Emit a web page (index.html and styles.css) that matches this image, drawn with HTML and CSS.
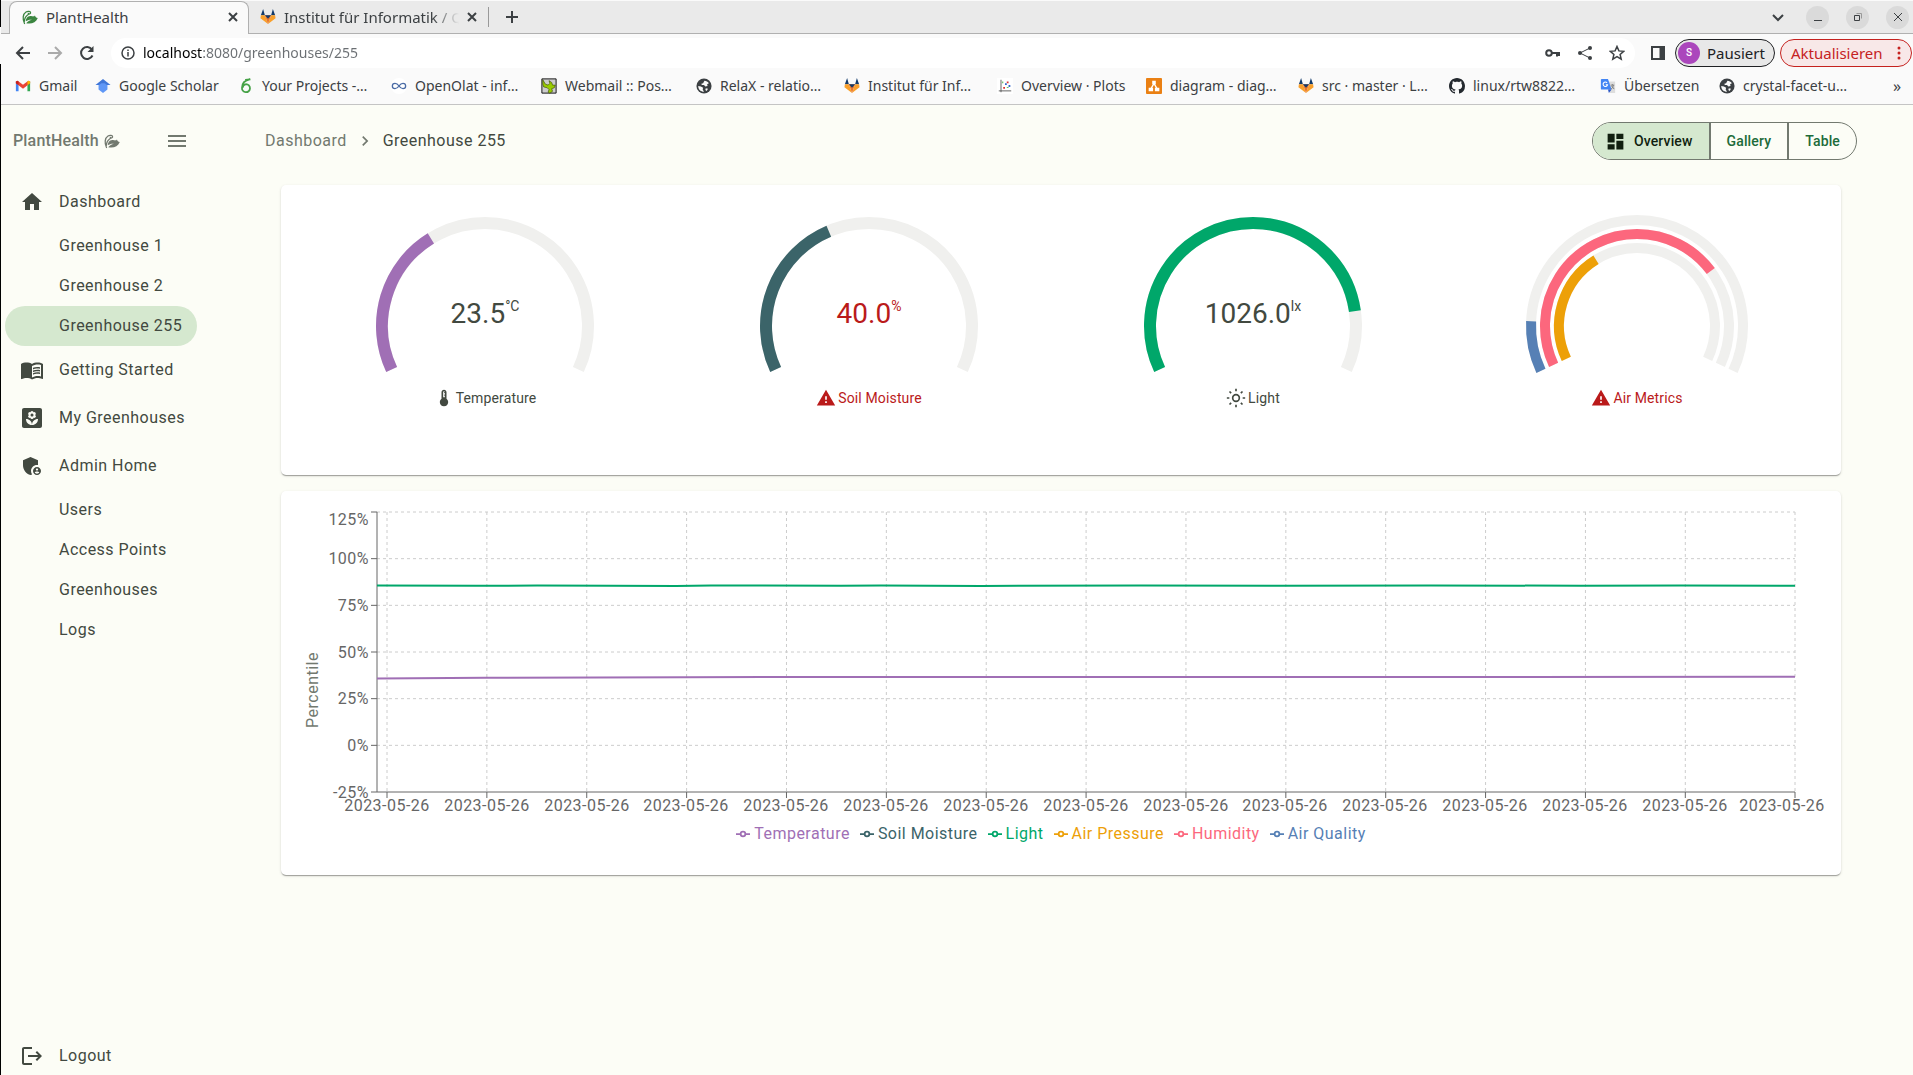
FILE: index.html
```html
<!DOCTYPE html>
<html lang="de">
<head>
<meta charset="utf-8">
<meta name="viewport" content="width=device-width, initial-scale=1">
<title>PlantHealth</title>
<link rel="stylesheet" href="styles.css">
</head>
<body>
<svg class="defs" aria-hidden="true">
  <symbol id="fox" viewBox="0 0 18 18"><path fill="#123a6b" d="M3.500 0 5.500 7H1zM14.500 0 17 7h-4.500z"/><path fill="#f9a02b" d="M1 7h4.500L9 17 .5 10.500zM17 7h-4.500L9 17l8.500-6.500z"/><path fill="#e8762c" d="M5.500 7h7L9 17z"/><path fill="#123a6b" d="M5.500 7h7L9 11z"/></symbol>
  <symbol id="globe" viewBox="0 0 18 18"><circle cx="9" cy="9" r="8.500" fill="#3c4043"/><path fill="#fafafa" d="M9.500 3c2 0 4 1 5 3l-2 1 .5 2-2.500.5L9 8H6.500L6 6.500 8 6zM2.500 9l3 .5L8 11l-.5 2L9 15.500C5.500 15.500 2.500 13 2.500 9zM11 11.500l2.500.5-1.500 2.500-1.500-1z"/></symbol>
  <symbol id="sprout" viewBox="0 0 16 16"><path fill="none" stroke="currentColor" stroke-width="1.300" stroke-linecap="round" d="M2.500 14.500C.3 10 .8 5 4 3c2-1.300 4.800-.7 4.600 1-.2 1.200-1.900 1.300-2.300.3M2.300 12.500c.2-3 1.500-5.500 3.900-7"/><path fill="currentColor" d="M4 10.500C5 7.500 7.500 6.600 10 7.300c1.600.4 2.500-.1 3-.8.300 1.500 1.200 2.200 2.800 2.500-2 4.500-6.300 6.500-11.600 5.200 1.600-1.700 3.300-2.700 5.800-3.400-2.700-.2-4.500.4-6.300 1.500z"/></symbol>
  <symbol id="warning" viewBox="0 0 24 24"><path d="M1 21h22L12 2 1 21zm12-3h-2v-2h2v2zm0-4h-2v-4h2v4z"/></symbol>
  <symbol id="legend-mark" viewBox="0 0 32 32"><path fill="none" stroke="currentColor" stroke-width="4" d="M0,16h10.667A5.333,5.333,0,1,1,21.333,16H32M21.333,16A5.333,5.333,0,1,1,10.667,16"/></symbol>
</svg>

<header class="browser">
  <div class="tabstrip">
    <div class="tab tab-active">
      <svg class="favicon green"><use href="#sprout"/></svg>
      <span class="tab-title">PlantHealth</span>
      <button class="plain" aria-label="Tab schließen"><svg class="i10" viewBox="0 0 10 10"><path d="M1 1l8 8M9 1L1 9"/></svg></button>
    </div>
    <div class="tab tab-back">
      <svg class="favicon"><use href="#fox"/></svg>
      <span class="tab-title fade">Institut für Informatik / Q</span>
      <button class="plain" aria-label="Tab schließen"><svg class="i10" viewBox="0 0 10 10"><path d="M1 1l8 8M9 1L1 9"/></svg></button>
    </div>
    <button class="plain new-tab" aria-label="Neuer Tab"><svg class="i12" viewBox="0 0 12 12"><path d="M6 0v12M0 6h12"/></svg></button>
    <div class="window-controls">
      <button class="plain" aria-label="Tabs suchen"><svg class="i12" viewBox="0 0 12 12"><path d="M1 4l5 5 5-5"/></svg></button>
      <button class="plain round" aria-label="Minimieren"><svg class="i10 thin" viewBox="0 0 10 10"><path d="M1 8.500h8"/></svg></button>
      <button class="plain round" aria-label="Wiederherstellen"><svg class="i10 thin" viewBox="0 0 10 10"><path d="M1.500 3.500h5v5h-5z"/><path class="pale" d="M3.500 1.500h5v5"/></svg></button>
      <button class="plain round" aria-label="Schließen"><svg class="i10 thin" viewBox="0 0 10 10"><path d="M1 1l8 8M9 1L1 9"/></svg></button>
    </div>
  </div>

  <div class="toolbar">
    <button class="plain" aria-label="Zurück"><svg class="i16" viewBox="0 0 16 16"><path d="M15 8H2M8 2L2 8l6 6"/></svg></button>
    <button class="plain disabled" aria-label="Vorwärts"><svg class="i16" viewBox="0 0 16 16"><path d="M1 8h13M8 2l6 6-6 6"/></svg></button>
    <button class="plain" aria-label="Neu laden"><svg class="i16" viewBox="0 0 16 16"><path d="M13.500 10.500A6 6 0 1 1 13 4.500"/><path class="solid" d="M14.500 1v6H8.500z"/></svg></button>
    <div class="omnibox">
      <svg class="i14 thin" viewBox="0 0 14 14"><circle cx="7" cy="7" r="6"/><path d="M7 6v4.500M7 3.500V5"/></svg>
      <input class="url" type="text" aria-label="Adresse" value="localhost:8080/greenhouses/255">
      <svg class="i16" viewBox="0 0 16 16"><circle cx="4" cy="8" r="2.800"/><path d="M7 8h8M12 8v3.500M14 8v3"/></svg>
      <svg class="i16" viewBox="0 0 16 16"><path class="hair" d="M13 3L3 8l10 5"/><circle class="solid" cx="13" cy="3" r="2"/><circle class="solid" cx="3" cy="8" r="2"/><circle class="solid" cx="13" cy="13" r="2"/></svg>
      <svg class="i16 thin" viewBox="0 0 16 16"><path d="M8 1.500l1.900 4.400 4.800.4-3.600 3.200 1.100 4.700L8 11.700l-4.200 2.500 1.100-4.700L1.300 6.300l4.800-.4z"/></svg>
    </div>
    <svg class="i14 panel" viewBox="0 0 14 14"><path d="M1 1h12v12H1z"/><path class="solid" d="M8.500 1H13v12H8.500z"/></svg>
    <button class="pill profile"><span class="avatar">S</span>Pausiert</button>
    <button class="pill update">Aktualisieren<svg class="dots" viewBox="0 0 4 14"><circle cx="2" cy="2" r="1.500"/><circle cx="2" cy="7" r="1.500"/><circle cx="2" cy="12" r="1.500"/></svg></button>
  </div>

  <nav class="bookmarks" aria-label="Lesezeichen">
    <a href="#"><svg viewBox="0 0 18 18"><path fill="#4285f4" d="M1 4v11h3V7z"/><path fill="#34a853" d="M14 7v8h3V4z"/><path fill="#ea4335" d="M1 4l2-1 6 4.500L15 3l2 1v2L9 12 1 6z"/><path fill="#c5221f" d="M1 4l2-1 1 1v4L1 6z"/><path fill="#fbbc04" d="M14 4l1-1 2 1v2l-3 2z"/></svg><span>Gmail</span></a>
    <a href="#"><svg viewBox="0 0 18 18"><path fill="#5f97f6" d="M9 4.500l5 3.500v5l-5 4-5-4V8z"/><path fill="#3f76d8" d="M9 1l8.500 7H13c-1-1.500-2.300-2-4-2s-3 .5-4 2H.5z"/></svg><span>Google Scholar</span></a>
    <a href="#"><svg viewBox="0 0 18 18"><path fill="none" stroke="#46a247" stroke-width="2" d="M13.500 1.500C8 2.500 4.500 6 4.500 11a4.500 4.500 0 1 0 4.500-4M5 11c.5-2.500 2-3.500 4-4M8 2l6-.5"/></svg><span>Your Projects -…</span></a>
    <a href="#"><svg viewBox="0 0 18 18"><circle cx="9" cy="9" r="9" fill="#fff"/><path fill="none" stroke="#4a6ba5" stroke-width="1.500" d="M9 9C7 6 5.500 6 4.500 6a3 3 0 0 0 0 6C5.500 12 7 12 9 9s3.500-3 4.500-3a3 3 0 0 1 0 6c-1 0-2.500 0-4.500-3z"/></svg><span>OpenOlat - inf…</span></a>
    <a href="#"><svg viewBox="0 0 18 18"><path fill="#ccc" stroke="#000" d="M1 1h16v16H1z"/><path fill="#9c0" stroke="#374800" stroke-width=".7" d="M2 2l3 5 3 1 2-2-1-3 3 2 1 3 3 0-1 3-3 1 1 3-3 2-2-1 1-3-2-2-4-1-1-3z"/></svg><span>Webmail :: Pos…</span></a>
    <a href="#"><svg><use href="#globe"/></svg><span>RelaX - relatio…</span></a>
    <a href="#"><svg><use href="#fox"/></svg><span>Institut für Inf…</span></a>
    <a href="#"><svg viewBox="0 0 18 18"><path fill="#fff" d="M0 0h18v18H0z"/><path fill="none" stroke="#555" d="M4.500 2v14M2 14.500h14"/><path fill="#d33" d="M7 10h2v2H7zM11 4h2v2h-2z"/><path fill="#36c" d="M9 6h2v2H9zM13 8h2v2h-2z"/><path fill="#3a3" d="M6 4h1v2H6zM11 10h2v1h-2z"/></svg><span>Overview · Plots</span></a>
    <a href="#"><svg viewBox="0 0 18 18"><rect x="0" y="0" width="18" height="18" rx="1" fill="#ea8013"/><path fill="none" stroke="#fff" stroke-width="1.500" d="M9 6l-4 7M9 6l4 7"/><path fill="#fff" d="M7 3h4v4H7zM3 11h5v4H3zM10 11h5v4h-5z"/></svg><span>diagram - diag…</span></a>
    <a href="#"><svg><use href="#fox"/></svg><span>src · master · L…</span></a>
    <a href="#"><svg viewBox="0 0 16 16"><path fill="#24292f" d="M8 0C3.580 0 0 3.580 0 8c0 3.540 2.290 6.530 5.470 7.590.4.070.55-.17.55-.38 0-.19-.01-.82-.01-1.490-2.010.37-2.530-.49-2.690-.94-.09-.23-.48-.94-.82-1.130-.28-.15-.68-.52-.01-.53.63-.01 1.080.58 1.230.82.720 1.210 1.870.87 2.330.66.070-.52.28-.87.51-1.070-1.780-.2-3.640-.89-3.640-3.950 0-.87.31-1.590.82-2.150-.08-.2-.36-1.020.08-2.120 0 0 .67-.21 2.200.82.640-.18 1.320-.27 2-.27s1.360.09 2 .27c1.530-1.040 2.200-.82 2.200-.82.440 1.100.16 1.920.08 2.120.51.56.82 1.270.82 2.150 0 3.070-1.870 3.750-3.650 3.950.29.25.54.73.54 1.480 0 1.070-.01 1.930-.01 2.200 0 .21.15.46.55.38A8 8 0 0 0 16 8c0-4.420-3.580-8-8-8z"/></svg><span>linux/rtw8822…</span></a>
    <a href="#"><svg viewBox="0 0 18 18"><path fill="#ddd" d="M8 4h9v13h-6z"/><path fill="#4285f4" d="M2 1h7l4 12H2q-1 0-1-1V2q0-1 1-1z"/><path fill="#2a56c6" d="M9 13h4l-3 4z"/><path fill="none" stroke="#fff" stroke-width="1.200" d="M8 5.500A2.500 2.500 0 1 0 8.500 7.500H6.500"/><path fill="none" stroke="#777" d="M12 8h4M14 7v1M15 8q0 3-2.500 4.500M13 9l3 3.500"/></svg><span>Übersetzen</span></a>
    <a href="#"><svg><use href="#globe"/></svg><span>crystal-facet-u…</span></a>
    <button class="plain more" aria-label="Weitere Lesezeichen">»</button>
  </nav>
</header>

<div class="app">
  <aside class="sidebar">
    <div class="brand">
      <span>PlantHealth</span>
      <svg class="brand-icon"><use href="#sprout"/></svg>
      <button class="plain menu" aria-label="Menü"><svg viewBox="0 0 24 24"><path d="M3 18h18v-2H3v2zm0-5h18v-2H3v2zm0-7v2h18V6H3z"/></svg></button>
    </div>
    <nav class="menu-list" aria-label="Hauptmenü">
      <a class="item" href="#"><svg viewBox="0 0 24 24"><path d="M10 20v-6h4v6h5v-8h3L12 3 2 12h3v8z"/></svg>Dashboard</a>
      <a class="item sub" href="#">Greenhouse 1</a>
      <a class="item sub" href="#">Greenhouse 2</a>
      <a class="item sub current" href="#" aria-current="page">Greenhouse 255</a>
      <a class="item" href="#"><svg viewBox="0 0 24 24"><path d="M21 5c-1.110-.35-2.330-.5-3.500-.5-1.950 0-4.050.4-5.500 1.500-1.450-1.100-3.550-1.500-5.500-1.500S2.450 4.900 1 6v14.650c0 .25.25.5.5.5.1 0 .15-.05.25-.05C3.100 20.450 5.050 20 6.500 20c1.950 0 4.050.4 5.500 1.500 1.350-.85 3.800-1.500 5.500-1.500 1.650 0 3.350.3 4.750 1.050.1.050.15.050.25.050.25 0 .5-.25.5-.5V6c-.6-.45-1.250-.75-2-1zm0 13.500c-1.100-.35-2.300-.5-3.500-.5-1.700 0-4.150.65-5.500 1.500V8c1.350-.85 3.800-1.500 5.500-1.500 1.200 0 2.400.15 3.500.5v11.500z"/><path d="M17.500 10.500c.88 0 1.730.09 2.500.26V9.240c-.79-.15-1.640-.24-2.500-.24-1.700 0-3.240.29-4.500.83v1.660c1.130-.64 2.700-.99 4.500-.99zM13 12.490v1.660c1.130-.64 2.700-.99 4.500-.99.88 0 1.730.09 2.500.26V11.900c-.79-.15-1.640-.24-2.500-.24-1.700 0-3.240.3-4.500.83zM17.500 14.330c-1.700 0-3.240.29-4.500.83v1.660c1.130-.64 2.700-.99 4.500-.99.88 0 1.730.09 2.500.26v-1.520c-.79-.16-1.640-.24-2.500-.24z"/></svg>Getting Started</a>
      <a class="item" href="#"><svg viewBox="0 0 24 24"><path d="M20 2H4c-1.100 0-2 .9-2 2v16c0 1.100.9 2 2 2h16c1.100 0 2-.9 2-2V4c0-1.100-.9-2-2-2z"/><g class="bloom"><circle cx="12" cy="6.500" r="1.600"/><circle cx="12" cy="11.500" r="1.600"/><circle cx="9.800" cy="7.700" r="1.600"/><circle cx="14.200" cy="7.700" r="1.600"/><circle cx="9.800" cy="10.300" r="1.600"/><circle cx="14.200" cy="10.300" r="1.600"/><path d="M12 19c0-3.500-2.500-6-6-6 0 3.500 2.500 6 6 6zM12 19c0-3.500 2.500-6 6-6 0 3.500-2.500 6-6 6z"/></g><circle cx="12" cy="9" r="1.500"/></svg>My Greenhouses</a>
      <a class="item" href="#"><svg viewBox="0 0 24 24"><path d="M17 11c.34 0 .67.04 1 .09V6.270L10.500 3 3 6.270v4.910c0 4.540 3.200 8.790 7.500 9.820.55-.13 1.080-.32 1.600-.55-.69-.98-1.100-2.170-1.100-3.450 0-3.310 2.690-6 6-6z"/><path d="M17 13c-2.210 0-4 1.790-4 4s1.790 4 4 4 4-1.790 4-4-1.790-4-4-4zm0 1.380c.62 0 1.120.51 1.120 1.120s-.51 1.120-1.120 1.120-1.120-.51-1.120-1.120.5-1.120 1.120-1.120zm0 5.370c-.93 0-1.740-.46-2.240-1.170.05-.72 1.510-1.080 2.240-1.080s2.190.36 2.240 1.080c-.5.71-1.310 1.170-2.240 1.170z"/></svg>Admin Home</a>
      <a class="item sub" href="#">Users</a>
      <a class="item sub" href="#">Access Points</a>
      <a class="item sub" href="#">Greenhouses</a>
      <a class="item sub" href="#">Logs</a>
      <a class="item logout" href="#"><svg viewBox="0 0 24 24"><path d="M17 7l-1.410 1.410L18.170 11H8v2h10.170l-2.580 2.580L17 17l5-5zM4 5h8V3H4c-1.100 0-2 .9-2 2v14c0 1.100.9 2 2 2h8v-2H4V5z"/></svg>Logout</a>
    </nav>
  </aside>

  <main class="content">
    <div class="topbar">
      <nav class="crumbs" aria-label="Brotkrumen">
        <a href="#">Dashboard</a>
        <svg viewBox="0 0 24 24"><path d="M10 6L8.590 7.410 13.170 12l-4.580 4.590L10 18l6-6z"/></svg>
        <span aria-current="page">Greenhouse 255</span>
      </nav>
      <div class="views" role="group" aria-label="Ansicht">
        <button class="selected" aria-pressed="true"><svg viewBox="0 0 24 24"><path d="M3 13h8V3H3v10zm0 8h8v-6H3v6zm10 0h8V11h-8v10zm0-18v6h8V3h-8z"/></svg>Overview</button>
        <button aria-pressed="false">Gallery</button>
        <button aria-pressed="false">Table</button>
      </div>
    </div>

    <section class="card gauges" aria-label="Messwerte">
      <figure class="gauge">
        <svg class="dial" viewBox="-120 -120 240 180">
          <path class="track" d="M-93.350 43.530A103 103 0 1 1 93.350 43.530"/>
          <path class="c-temp" pathLength="100" stroke-dasharray="36.200 200" d="M-93.350 43.530A103 103 0 1 1 93.350 43.530"/>
          <text y="-3">23.5<tspan class="unit" dy="-12">°C</tspan></text>
        </svg>
        <figcaption><svg viewBox="0 0 24 24"><path d="M15 13V5c0-1.660-1.340-3-3-3S9 3.340 9 5v8c-1.210.91-2 2.370-2 4 0 2.760 2.240 5 5 5s5-2.240 5-5c0-1.630-.79-3.090-2-4zm-4-8c0-.55.45-1 1-1s1 .45 1 1h-1v1h1v2h-1v1h1v2h-2V5z"/></svg>Temperature</figcaption>
      </figure>
      <figure class="gauge alert">
        <svg class="dial" viewBox="-120 -120 240 180">
          <path class="track" d="M-93.350 43.530A103 103 0 1 1 93.350 43.530"/>
          <path class="c-soil" pathLength="100" stroke-dasharray="40 200" d="M-93.350 43.530A103 103 0 1 1 93.350 43.530"/>
          <text y="-3">40.0<tspan class="unit" dy="-12">%</tspan></text>
        </svg>
        <figcaption><svg><use href="#warning"/></svg>Soil Moisture</figcaption>
      </figure>
      <figure class="gauge">
        <svg class="dial" viewBox="-120 -120 240 180">
          <path class="track" d="M-93.350 43.530A103 103 0 1 1 93.350 43.530"/>
          <path class="c-light" pathLength="100" stroke-dasharray="85.500 200" d="M-93.350 43.530A103 103 0 1 1 93.350 43.530"/>
          <text y="-3">1026.0<tspan class="unit" dy="-12">lx</tspan></text>
        </svg>
        <figcaption><svg viewBox="0 0 24 24"><path fill="none" stroke="currentColor" stroke-width="2" d="M12 8a4 4 0 1 0 0 8 4 4 0 0 0 0-8zM12 1v3M12 20v3M1 12h3M20 12h3M4.200 4.200l2 2M17.800 17.800l2 2M4.200 19.800l2-2M17.800 6.200l2-2"/></svg>Light</figcaption>
      </figure>
      <figure class="gauge alert">
        <svg class="dial rings" viewBox="-120 -120 240 180">
          <path class="track" d="M-96.070 44.800A106 106 0 1 1 96.070 44.800"/>
          <path class="track" d="M-83.380 38.880A92 92 0 1 1 83.380 38.880"/>
          <path class="track" d="M-70.690 32.960A78 78 0 1 1 70.690 32.960"/>
          <path class="c-quality" pathLength="100" stroke-dasharray="12 200" d="M-96.070 44.800A106 106 0 1 1 96.070 44.800"/>
          <path class="c-humidity" pathLength="100" stroke-dasharray="73.200 200" d="M-83.380 38.880A92 92 0 1 1 83.380 38.880"/>
          <path class="c-pressure" pathLength="100" stroke-dasharray="36.200 200" d="M-70.690 32.960A78 78 0 1 1 70.690 32.960"/>
        </svg>
        <figcaption><svg><use href="#warning"/></svg>Air Metrics</figcaption>
      </figure>
    </section>

    <section class="card history" aria-label="Verlauf">
      <svg class="chart" viewBox="0 0 1560 331">
        <path class="grid" d="M96 21H1514M96 67.670H1514M96 114.330H1514M96 161H1514M96 207.670H1514M96 254.330H1514"/>
        <path class="grid" d="M106 21V301M205.870 21V301M305.740 21V301M405.610 21V301M505.480 21V301M605.350 21V301M705.220 21V301M805.090 21V301M904.960 21V301M1004.830 21V301M1104.700 21V301M1204.570 21V301M1304.440 21V301M1404.310 21V301M1514 21V301"/>
        <path class="axis" d="M96 21V301H1514M90 21h6M90 67.670h6M90 114.330h6M90 161h6M90 207.670h6M90 254.330h6M90 301h6"/>
        <path class="axis" d="M106 301v6M205.870 301v6M305.740 301v6M405.610 301v6M505.480 301v6M605.350 301v6M705.220 301v6M805.090 301v6M904.960 301v6M1004.830 301v6M1104.700 301v6M1204.570 301v6M1304.440 301v6M1404.310 301v6M1514 301v6"/>
        <path class="series c-temp" d="M96 187.500L205 186.700 405 186.200 605 186 1200 186 1514 185.700"/>
        <path class="series c-light" d="M96 94.600L195 94.800 256 94.500 330 94.800 395 94.900 430 94.500 560 94.800 600 94.500 700 94.900 860 94.500 1000 94.700 1150 94.500 1300 94.700 1400 94.500 1514 94.700"/>
        <g class="ylabels">
          <text x="88" y="34">125%</text><text x="88" y="73">100%</text><text x="88" y="120">75%</text><text x="88" y="167">50%</text><text x="88" y="213">25%</text><text x="88" y="260">0%</text><text x="88" y="307">-25%</text>
        </g>
        <g class="xlabels">
          <text x="106" y="320">2023-05-26</text><text x="206" y="320">2023-05-26</text><text x="306" y="320">2023-05-26</text><text x="405" y="320">2023-05-26</text><text x="505" y="320">2023-05-26</text><text x="605" y="320">2023-05-26</text><text x="705" y="320">2023-05-26</text><text x="805" y="320">2023-05-26</text><text x="905" y="320">2023-05-26</text><text x="1004" y="320">2023-05-26</text><text x="1104" y="320">2023-05-26</text><text x="1204" y="320">2023-05-26</text><text x="1304" y="320">2023-05-26</text><text x="1404" y="320">2023-05-26</text><text x="1501" y="320">2023-05-26</text>
        </g>
        <text class="ytitle" transform="translate(37 199) rotate(-90)">Percentile</text>
      </svg>
      <ul class="legend">
        <li class="t-temp"><svg><use href="#legend-mark"/></svg>Temperature</li>
        <li class="t-soil"><svg><use href="#legend-mark"/></svg>Soil Moisture</li>
        <li class="t-light"><svg><use href="#legend-mark"/></svg>Light</li>
        <li class="t-pressure"><svg><use href="#legend-mark"/></svg>Air Pressure</li>
        <li class="t-humidity"><svg><use href="#legend-mark"/></svg>Humidity</li>
        <li class="t-quality"><svg><use href="#legend-mark"/></svg>Air Quality</li>
      </ul>
    </section>
  </main>
</div>
</body>
</html>
```
FILE: styles.css
```css
:root {
  --page: #fcfdf6;
  --ink: #424940;
  --muted: #72796f;
  --accent: #d5e8cf;
  --error: #ba1a1a;
  --temp: #a06fb5;
  --soil: #3b6469;
  --light: #00a76a;
  --pressure: #eda008;
  --humidity: #fc677d;
  --quality: #5680b5;
}
* { box-sizing: border-box; }
body {
  margin: 0;
  min-height: 100vh;
  padding-left: 1px;
  display: flex;
  flex-direction: column;
  background: linear-gradient(#000 0 27px, #fafafa 27px 64px, #000 64px) left top / 1px 100% no-repeat var(--page);
  color: var(--ink);
  font: 16px/24px Roboto, sans-serif;
}
a { color: inherit; text-decoration: none; }
button { font: inherit; color: inherit; }
svg { display: block; flex: none; }
.defs { position: absolute; width: 0; height: 0; }
.plain { display: flex; align-items: center; justify-content: center; border: 0; padding: 0; background: none; }

/* browser frame */
.browser {
  background: #fafafa;
  border-bottom: 1px solid #c4c4c4;
  color: #3c4043;
  font: 14px/20px "Noto Sans", "Open Sans", sans-serif;
}
.browser .plain svg, .omnibox > svg, .panel { fill: none; stroke: currentColor; stroke-width: 2; }
.browser .plain svg.thin { stroke-width: 1; }
.omnibox > svg.thin { stroke-width: 1.5; }
.browser .hair { stroke-width: 1; }
.browser .solid { fill: currentColor; stroke: none; }
.browser .pale { stroke: #999; }
.i10 { width: 10px; height: 10px; }
.i12 { width: 12px; height: 12px; }
.i14 { width: 14px; height: 14px; }
.i16 { width: 16px; height: 16px; }
.tabstrip {
  display: flex;
  height: 34px;
  padding-left: 8px;
  background: #eaeaea;
  border-top: 1px solid #fafafa;
  border-bottom: 1px solid #b0b0b0;
  font-size: 15px;
}
.tab { display: flex; align-items: center; gap: 8px; height: 33px; border: 1px solid transparent; border-bottom: 0; padding: 0 10px 2px 12px; }
.tab-active {
  width: 240px;
  background: #fafafa;
  border-color: #b0b0b0;
  border-radius: 8px 8px 0 0;
}
.tab-back { width: 239px; padding-left: 10px; }
.tab-title { flex: 1; overflow: hidden; white-space: nowrap; }
.fade { -webkit-mask-image: linear-gradient(90deg, #000 85%, transparent); mask-image: linear-gradient(90deg, #000 85%, transparent); }
.favicon { width: 16px; height: 16px; }
.green { color: #3b8540; }
.new-tab { width: 45px; height: 20px; padding-left: 1px; margin-top: 6px; border-left: 1px solid #999; }
.window-controls { display: flex; align-items: center; gap: 17px; margin-left: auto; padding-right: 4px; }
.window-controls .plain { width: 23px; height: 23px; }
.window-controls .round { border-radius: 50%; background: #dadada; }
.toolbar { display: flex; align-items: center; height: 38px; padding-left: 14px; gap: 16px; }
.disabled { color: #aaa; }
.omnibox {
  flex: 1;
  display: flex;
  align-items: center;
  gap: 16px;
  height: 30px;
  padding: 0 10px;
  border-radius: 15px;
  background: #fff;
}
.url {
  flex: 1;
  min-width: 0;
  border: 0;
  padding: 0;
  margin-left: -8px;
  outline: 0;
  font: inherit;
  color: transparent;
  background: linear-gradient(90deg, #000 60px, #6b6f73 60px);
  -webkit-background-clip: text;
  background-clip: text;
}
.pill { display: flex; align-items: center; height: 28px; padding: 0 10px; border: 1px solid; border-radius: 14px; font-size: 15px; white-space: nowrap; }
.profile { width: 100px; gap: 7px; padding: 0 2px; margin-left: -6px; background: #e8e8e8; color: #202124; }
.avatar { width: 22px; height: 22px; border-radius: 50%; background: #ab47bc; color: #fff; font: 500 10px/22px Roboto, sans-serif; text-align: center; }
.update { width: 132px; justify-content: space-between; margin-left: -11px; margin-right: 1px; background: #f8e8e8; color: #c5221f; }
.dots { width: 4px; height: 14px; fill: currentColor; }
.bookmarks {
  display: grid;
  grid-template-columns: 80px 143px 153px 150px 155px 148px 153px 149px 152px 151px 151px 119px 1fr 12px;
  align-items: center;
  height: 32px;
  padding: 0 10px 4px 14px;
}
.bookmarks a { display: flex; align-items: center; gap: 8px; white-space: nowrap; }
.bookmarks svg { width: 16px; height: 16px; }
.more { font-size: 16px; }

/* application shell */
.app { flex: 1; display: flex; }
.sidebar { width: 200px; display: flex; flex-direction: column; padding: 17px 4px 0; }
.brand { display: flex; align-items: center; height: 38px; padding: 0 8px; gap: 5px; color: var(--muted); font-weight: 500; letter-spacing: .01em; }
.brand-icon { width: 16px; height: 16px; }
.menu { margin-left: auto; }
.menu svg { width: 24px; height: 24px; fill: currentColor; }
.menu-list { flex: 1; display: flex; flex-direction: column; margin-top: 18px; letter-spacing: .03em; }
.item { display: flex; align-items: center; gap: 15px; height: 48px; padding-left: 15px; border-radius: 20px; white-space: nowrap; }
.item svg { width: 24px; height: 24px; fill: currentColor; }
.bloom { fill: var(--page); }
.sub { height: 40px; padding-left: 54px; }
.current { background: var(--accent); }
.logout { height: 38px; margin-top: auto; }
.content { flex: 1; min-width: 0; padding: 17px 56px 16px 64px; }
.topbar { display: flex; align-items: center; justify-content: space-between; }
.crumbs { display: flex; align-items: center; gap: 8px; letter-spacing: .03em; }
.crumbs a { color: var(--muted); }
.crumbs svg { width: 20px; height: 20px; fill: var(--muted); }
.views { display: flex; height: 38px; border: 1px solid var(--muted); border-radius: 19px; overflow: hidden; font-size: 14px; font-weight: 500; letter-spacing: .01em; }
.views button { display: flex; align-items: center; gap: 8px; border: 0; padding: 0 16px; background: none; color: #206b3a; letter-spacing: inherit; }
.views button + button { border-left: 2px solid var(--muted); }
.views .selected { background: var(--accent); color: #111f0f; padding-left: 12px; }
.views svg { width: 21px; height: 21px; fill: currentColor; }
.card {
  margin: 0 16px;
  border-radius: 5px;
  background: #fff;
  box-shadow: 0 2px 1px -1px rgba(0, 0, 0, .2), 0 1px 1px rgba(0, 0, 0, .14), 0 1px 3px rgba(0, 0, 0, .12);
}

/* gauges */
.gauges { display: grid; grid-template-columns: repeat(4, 1fr); margin-top: 25px; padding: 21px 12px 65px; }
.gauge { margin: 0; display: flex; flex-direction: column; align-items: center; }
.alert { color: var(--error); }
.dial { width: 240px; height: 180px; }
.dial path { fill: none; stroke-width: 12; }
.rings path { stroke-width: 10; }
.dial .track { stroke: #f0f0ee; }
.dial text { fill: currentColor; font-size: 28px; text-anchor: middle; }
.dial .unit { font-size: 14px; }
.c-temp { stroke: var(--temp); }
.c-soil { stroke: var(--soil); }
.c-light { stroke: var(--light); }
.c-pressure { stroke: var(--pressure); }
.c-humidity { stroke: var(--humidity); }
.c-quality { stroke: var(--quality); }
figcaption { display: flex; align-items: center; gap: 2px; font-size: 14px; letter-spacing: .01em; }
figcaption svg { width: 20px; height: 20px; fill: currentColor; }

/* history chart */
.history { margin-top: 16px; padding-bottom: 29px; letter-spacing: .03em; }
.chart { width: 100%; }
.grid { fill: none; stroke: #ccc; stroke-dasharray: 3 3; }
.axis { fill: none; stroke: #666; }
.series { fill: none; stroke-width: 2; }
.chart text { fill: #666; }
.ylabels { text-anchor: end; }
.xlabels, .ytitle { text-anchor: middle; }
.chart .ytitle { fill: var(--muted); }
.legend { display: flex; justify-content: center; gap: 10px; margin: 0; padding: 0 20px 0 0; list-style: none; }
.legend li { display: flex; align-items: center; gap: 4px; }
.legend svg { width: 14px; height: 14px; }
.t-temp { color: var(--temp); }
.t-soil { color: var(--soil); }
.t-light { color: var(--light); }
.t-pressure { color: var(--pressure); }
.t-humidity { color: var(--humidity); }
.t-quality { color: var(--quality); }
```
